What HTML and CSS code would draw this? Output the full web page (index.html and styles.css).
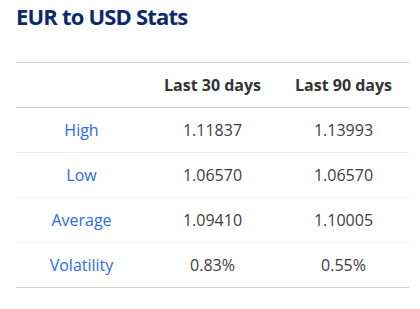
FILE: index.html
```html
<!DOCTYPE html>
<html>
<head>
<meta charset="utf-8">
<link rel="stylesheet" href="styles.css">
</head>
<body>
<div class="stats">
  <h2 class="stats-title">EUR to USD Stats</h2>
  <table class="stats-table">
    <thead>
      <tr><th></th><th>Last 30 days</th><th>Last 90 days</th></tr>
    </thead>
    <tbody>
      <tr><td class="label">High</td><td>1.11837</td><td>1.13993</td></tr>
      <tr><td class="label">Low</td><td>1.06570</td><td>1.06570</td></tr>
      <tr><td class="label">Average</td><td>1.09410</td><td>1.10005</td></tr>
      <tr><td class="label">Volatility</td><td>0.83%</td><td>0.55%</td></tr>
    </tbody>
  </table>
</div>
</body>
</html>
```
FILE: styles.css
```css
html, body {
  margin: 0;
  padding: 0;
  background: #fff;
}
body {
  font-family: "Open Sans", "Noto Sans", sans-serif;
}
.stats {
  padding: 0 11px 0 16px;
}
.stats-title {
  margin: 0;
  padding-top: 1px;
  font-size: 22px;
  line-height: 30px;
  font-weight: 700;
  letter-spacing: -0.8px;
  color: #0a2a6c;
}
.stats-table {
  margin-top: 31px;
  width: 100%;
  border-collapse: collapse;
  table-layout: fixed;
  font-size: 16px;
}
.stats-table th,
.stats-table td {
  height: 44px;
  padding: 0;
  text-align: center;
  vertical-align: middle;
  color: #3d3d3d;
}
.stats-table thead th {
  border-top: 1px solid #cfcfcf;
  border-bottom: 1px solid #cfcfcf;
  font-weight: 700;
  color: #333;
}
.stats-table tbody td {
  border-bottom: 1px solid #ececec;
}
.stats-table tbody tr:last-child td {
  border-bottom: 1px solid #cfcfcf;
}
.stats-table .label {
  color: #2b6be6;
}
```
